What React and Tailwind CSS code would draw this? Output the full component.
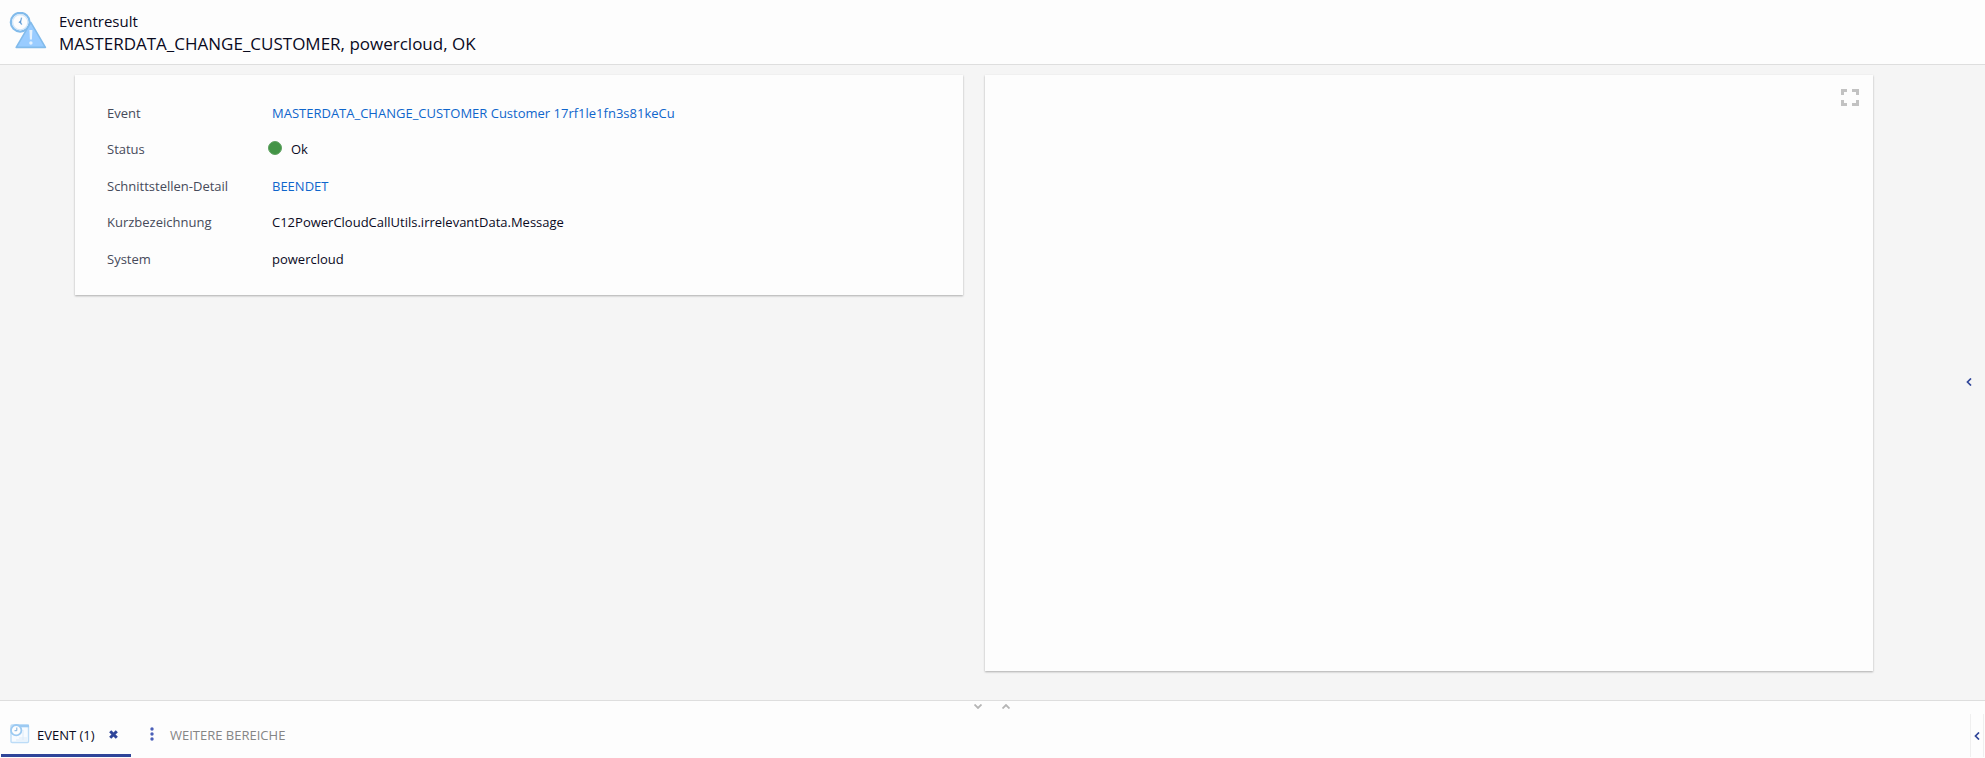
import { useState } from "react";

const details = [
  { label: "Event", value: "MASTERDATA_CHANGE_CUSTOMER Customer 17rf1le1fn3s81keCu", href: "#event" },
  { label: "Status", value: "Ok", status: true },
  { label: "Schnittstellen-Detail", value: "BEENDET", href: "#detail" },
  { label: "Kurzbezeichnung", value: "C12PowerCloudCallUtils.irrelevantData.Message" },
  { label: "System", value: "powercloud" },
];

const EventResultIcon = () => (
  <svg width="40" height="40" viewBox="0 0 40 40" aria-hidden="true">
    <circle cx="11.2" cy="10.2" r="9.4" fill="#fdfdfd" stroke="#82bbeb" strokeWidth="2.2" />
    <circle cx="11.2" cy="10.2" r="7.6" fill="none" stroke="#cfe5f9" strokeWidth="1.2" />
    <path d="M12.6 5.6L11.4 10.4l1.4 2.2" fill="none" stroke="#7db0e0" strokeWidth="1.4" />
    <path d="M12 8.2v3.4l-2.6-1.4z" fill="#5f97d0" />
    <path d="M21.8 10.4L36.4 35.4H7.2z" fill="#99ccff" stroke="#82bbeb" strokeWidth="1.6" strokeLinejoin="round" />
    <path d="M20.4 18h3l-.5 9.6h-2z" fill="#e6f2fd" />
    <circle cx="21.9" cy="31" r="1.7" fill="#e6f2fd" />
  </svg>
);

const EventTabIcon = () => (
  <svg width="20" height="20" viewBox="0 0 20 20" aria-hidden="true">
    <rect x="1" y="1" width="17.5" height="17.5" rx="1" fill="#f7fbff" stroke="#bcdcf7" strokeWidth="1.4" />
    <path d="M5 2h14" stroke="#9ccaf2" strokeWidth="2.6" />
    <path d="M13 6v10M9 14h8M6 16h11" stroke="#dcebf9" />
    <circle cx="6.2" cy="6.2" r="5.2" fill="#fdfdfd" stroke="#9ccaf2" strokeWidth="1.8" />
    <path d="M6.8 3.5v3.2H4.5" fill="none" stroke="#7aaede" />
  </svg>
);

const ChevronLeft = () => (
  <svg width="6" height="8" viewBox="0 0 6 8" aria-hidden="true">
    <path d="M5 .5L1.5 4 5 7.5" fill="none" stroke="#2f4599" strokeWidth="1.7" />
  </svg>
);

const Detail = ({ label, value, href, status }) => (
  <div className="flex items-center">
    <dt className="w-[165px] shrink-0 text-[#464a5a]">{label}</dt>
    <dd className="flex items-center text-[#0a0a1e]">
      {status && (
        <span className="mr-[9px] mb-[3px] -ml-1 size-[14px] rounded-full border border-[#5fa261] bg-[#439446]"></span>
      )}
      {href ? (
        <a href={href} className="text-[#0f66cc] hover:underline">
          {value}
        </a>
      ) : (
        value
      )}
    </dd>
  </div>
);

const App = () => {
  const [open, setOpen] = useState(true);

  return (
    <div className="flex min-h-screen flex-col bg-[#f5f5f5] font-['Open_Sans','Noto_Sans',sans-serif] text-[13px] text-[#0a0a1e]">
      {/* Header */}
      <header className="flex h-[65px] items-center gap-[10px] border-b border-[#dedede] bg-[#fdfdfd] pl-[9px]">
        <EventResultIcon />
        <div className="pt-[2px]">
          <p className="text-[15px] leading-[21px]">Eventresult</p>
          <h1 className="text-[17px] leading-[23px]">
            MASTERDATA_CHANGE_CUSTOMER, powercloud, OK
          </h1>
        </div>
      </header>

      {/* Content */}
      <main className="flex flex-1">
        <div className="grid flex-1 grid-cols-2 gap-[22px] pt-[10px] pr-[93px] pb-[29px] pl-[75px]">
          <section className="self-start bg-[#fdfdfd] px-8 pt-5 pb-[17px] shadow-[0_1px_2px_rgba(0,0,0,0.3)]">
            <dl className="grid h-[183px] auto-rows-fr">
              {details.map((item) => (
                <Detail key={item.label} {...item} />
              ))}
            </dl>
          </section>

          <section className="flex items-start justify-end bg-[#fdfdfd] pt-[14px] pr-[14px] shadow-[0_1px_2px_rgba(0,0,0,0.3)]">
            <button type="button" aria-label="Vollbild">
              <svg width="18" height="17" viewBox="0 0 18 17" fill="#c2c2c2" aria-hidden="true">
                <path d="M0 0h6v3H3v3H0zM11 0h7v6h-3V3h-4zM0 11h3v3h3v3H0zM15 11h3v6h-7v-3h4z" />
              </svg>
            </button>
          </section>
        </div>
        <button type="button" aria-label="Seitenleiste" className="w-[19px] shrink-0 pb-px">
          <ChevronLeft />
        </button>
      </main>

      {/* Bottom area */}
      <footer className="flex h-[58px] flex-col border-t border-[#dedede] bg-[#fdfdfd] pb-px">
        <div className="flex h-[13px] items-start justify-center gap-5 pr-[2px]">
          <button type="button" aria-label="Verkleinern" onClick={() => setOpen(false)} className="pt-[3px]">
            <svg width="8" height="5" viewBox="0 0 8 5" aria-hidden="true">
              <path d="M.5 .5L4 4 7.5 .5" fill="none" stroke="#b5b5b5" strokeWidth="1.8" />
            </svg>
          </button>
          <button type="button" aria-label="Vergrößern" onClick={() => setOpen(true)} className="pt-[3px]">
            <svg width="8" height="5" viewBox="0 0 8 5" aria-hidden="true">
              <path d="M.5 4.5L4 1l3.5 3.5" fill="none" stroke="#b5b5b5" strokeWidth="1.8" />
            </svg>
          </button>
        </div>

        <div className="flex flex-1 justify-between">
          <nav className="flex">
            {open && (
              <div className="ml-px flex w-[130px] items-center border-b-[3px] border-[#2f4599] pl-[9px]">
                <button type="button" className="flex items-center gap-[7px]">
                  <EventTabIcon />
                  <span className="pt-[3px]">EVENT (1)</span>
                </button>
                <button type="button" aria-label="Schließen" className="ml-[14px]">
                  <svg width="9" height="9" viewBox="0 0 9 9" aria-hidden="true">
                    <path d="M1.2 1.2l6.6 6.6M7.8 1.2L1.2 7.8" stroke="#2f4599" strokeWidth="3" />
                  </svg>
                </button>
              </div>
            )}
            <button type="button" className="ml-[19px] flex items-center gap-4 border-b-[3px] border-transparent text-[#858585]">
              <svg width="4" height="14" viewBox="0 0 4 14" fill="#4a5fb8" aria-hidden="true">
                <circle cx="2" cy="2" r="1.7" />
                <circle cx="2" cy="7" r="1.7" />
                <circle cx="2" cy="12" r="1.7" />
              </svg>
              <span className="pt-[3px]">WEITERE BEREICHE</span>
            </button>
          </nav>
          <button type="button" aria-label="Einblenden" className="mr-px flex w-[14px] items-center justify-center border-x border-[#efefef]">
            <ChevronLeft />
          </button>
        </div>
      </footer>
    </div>
  );
};

export default App;
